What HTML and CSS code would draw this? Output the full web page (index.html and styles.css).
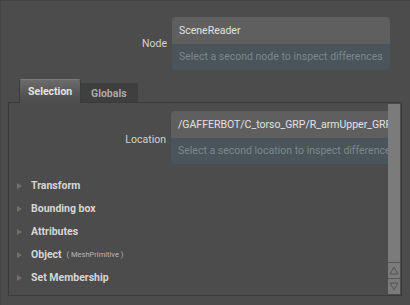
FILE: index.html
```html
<!DOCTYPE html>
<html>
<head>
<meta charset="utf-8">
<link rel="stylesheet" href="styles.css">
</head>
<body>
<div class="window">
  <div class="row node-row">
    <div class="label">Node</div>
    <div class="field node-field">
      <div class="field-top">SceneReader</div>
      <div class="field-bottom">Select a second node to inspect differences</div>
    </div>
  </div>

  <div class="tabs">
    <div class="tab active">Selection</div>
    <div class="tab">Globals</div>
  </div>

  <div class="panel">
    <div class="content">
      <div class="row loc-row">
        <div class="label loc-label">Location</div>
        <div class="field loc-field">
          <div class="field-top">/GAFFERBOT/C_torso_GRP/R_armUpper_GRP/R_armUpper_CPT</div>
          <div class="field-bottom">Select a second location to inspect differences</div>
        </div>
      </div>
      <div class="sections">
        <div class="section"><span class="tri"></span><span class="sec-name">Transform</span></div>
        <div class="section"><span class="tri"></span><span class="sec-name">Bounding box</span></div>
        <div class="section"><span class="tri"></span><span class="sec-name">Attributes</span></div>
        <div class="section"><span class="tri"></span><span class="sec-name">Object</span><span class="sec-note">( MeshPrimitive )</span></div>
        <div class="section"><span class="tri"></span><span class="sec-name">Set Membership</span></div>
      </div>
    </div>
    <div class="scrollbar">
      <div class="thumb"></div>
      <div class="sbtn">
        <svg width="10" height="9" viewBox="0 0 10 9"><path d="M5 1.2 L9 8 L1 8 Z" fill="none" stroke="#555" stroke-width="1"/></svg>
      </div>
      <div class="sbtn">
        <svg width="10" height="9" viewBox="0 0 10 9"><path d="M1 1 L9 1 L5 7.8 Z" fill="none" stroke="#555" stroke-width="1"/></svg>
      </div>
    </div>
  </div>
</div>
</body>
</html>
```

FILE: styles.css
```css
html, body {
  margin: 0;
  padding: 0;
  background: #4c4c4c;
}
body {
  width: 410px;
  height: 305px;
  overflow: hidden;
  font-family: Roboto, "Liberation Sans", sans-serif;
  font-size: 10.5px;
}
.window {
  width: 410px;
  height: 305px;
  box-sizing: border-box;
  border-top: 1px solid #434343;
  border-left: 1px solid #434343;
  padding: 16px 0 0 7px;
}
.row {
  display: flex;
  align-items: center;
}
.label {
  color: #d2d2d2;
  text-align: right;
  width: 158px;
  padding-right: 5px;
  box-sizing: border-box;
  white-space: nowrap;
}
.node-row .label {
  width: 164px;
}
.field {
  border-radius: 4px;
  overflow: hidden;
  white-space: nowrap;
}
.node-field {
  width: 218px;
}
.field-top {
  background: #5f5f5f;
  color: #e2e2e2;
  height: 27px;
  line-height: 27px;
  padding-left: 7px;
  overflow: hidden;
}
.field-bottom {
  background: #49545b;
  color: #7c878e;
  height: 26px;
  line-height: 26px;
  padding-left: 7px;
  overflow: hidden;
}
.tabs {
  display: flex;
  align-items: flex-end;
  margin-top: 9px;
  padding-left: 11px;
  height: 23px;
}
.tab {
  font-weight: bold;
  box-sizing: border-box;
}
.tab.active {
  width: 62px;
  height: 24px;
  padding: 5px 0 0 8px;
  color: #e4e4e4;
  background: linear-gradient(#6c6c6c, #555555 60%, #4c4c4c);
  border: 1px solid #3c3c3c;
  border-top-color: #7a7a7a;
  border-bottom: none;
  border-radius: 3px 3px 0 0;
  position: relative;
  z-index: 1;
  margin-bottom: -1px;
}
.tab:not(.active) {
  width: 57px;
  height: 19px;
  padding: 4px 0 0 10px;
  color: #a9a9a9;
  background: #3f3f3f;
}
.panel {
  width: 394px;
  height: 194px;
  box-sizing: border-box;
  border: 1px solid #3a3a3a;
  padding: 1px;
  display: flex;
}
.content {
  flex: 1;
  overflow: hidden;
  padding-top: 7px;
}
.loc-row .label {
  width: 161px;
  padding-top: 3px;
}
.loc-field {
  flex: 1;
  border-radius: 4px 0 0 4px;
}
.sections {
  padding-top: 10px;
}
.section {
  height: 23px;
  display: flex;
  align-items: center;
  padding-left: 7px;
}
.tri {
  width: 0;
  height: 0;
  border-top: 3px solid transparent;
  border-bottom: 3px solid transparent;
  border-left: 5px solid #707070;
  margin-right: 9px;
}
.sec-name {
  font-weight: bold;
  color: #d6d6d6;
}
.sec-note {
  font-size: 7.5px;
  color: #b8b8b8;
  margin-left: 5px;
}
.scrollbar {
  width: 12px;
  display: flex;
  flex-direction: column;
}
.thumb {
  flex: 1;
  background: #7b7b7b;
}
.sbtn {
  height: 15px;
  background: #7b7b7b;
  border-top: 1px solid #565656;
  display: flex;
  align-items: center;
  justify-content: center;
}
```
